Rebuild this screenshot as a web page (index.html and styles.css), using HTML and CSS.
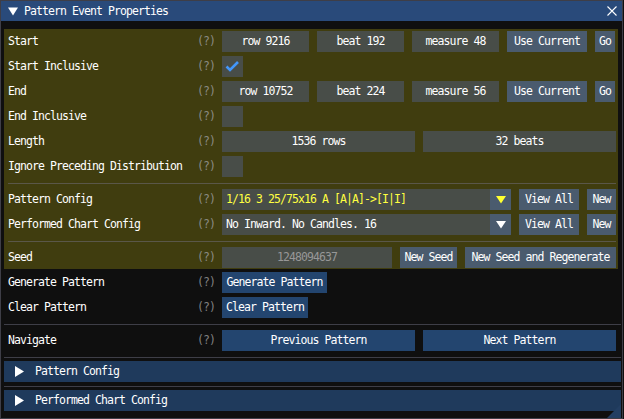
FILE: index.html
```html
<!DOCTYPE html>
<html>
<head>
<meta charset="utf-8">
<link rel="stylesheet" href="styles.css">
</head>
<body>
<div class="window">
  <div class="titlebar">
    <svg class="title-arrow" width="10" height="9" viewBox="0 0 10 9"><polygon points="0,0.5 10,0.5 5,8.5" fill="#fff"/></svg>
    <span class="title">Pattern Event Properties</span>
    <svg class="close" width="10" height="10" viewBox="0 0 10 10"><path d="M0.5 0.5 L9.5 9.5 M9.5 0.5 L0.5 9.5" stroke="#fff" stroke-width="1.1" fill="none"/></svg>
  </div>
  <div class="content">
    <div class="olive">
      <div class="row">
        <span class="label">Start</span><span class="help">(?)</span>
        <div class="ctl">
          <span class="field w87">row 9216</span>
          <span class="field w87">beat 192</span>
          <span class="field w87">measure 48</span>
          <span class="btn w80">Use Current</span>
          <span class="btn w20">Go</span>
        </div>
      </div>
      <div class="row">
        <span class="label">Start Inclusive</span><span class="help">(?)</span>
        <div class="ctl">
          <span class="check"><svg width="21" height="21" viewBox="0 0 21 21"><polyline points="4.5,10.5 8,14 16,6" fill="none" stroke="#4296fa" stroke-width="2.6"/></svg></span>
        </div>
      </div>
      <div class="row">
        <span class="label">End</span><span class="help">(?)</span>
        <div class="ctl">
          <span class="field w87">row 10752</span>
          <span class="field w87">beat 224</span>
          <span class="field w87">measure 56</span>
          <span class="btn w80">Use Current</span>
          <span class="btn w20">Go</span>
        </div>
      </div>
      <div class="row">
        <span class="label">End Inclusive</span><span class="help">(?)</span>
        <div class="ctl"><span class="check"></span></div>
      </div>
      <div class="row">
        <span class="label">Length</span><span class="help">(?)</span>
        <div class="ctl">
          <span class="field grow">1536 rows</span>
          <span class="field grow">32 beats</span>
        </div>
      </div>
      <div class="row">
        <span class="label">Ignore Preceding Distribution</span><span class="help">(?)</span>
        <div class="ctl"><span class="check"></span></div>
      </div>
      <div class="sep"></div>
      <div class="row">
        <span class="label">Pattern Config</span><span class="help">(?)</span>
        <div class="ctl">
          <div class="combo">
            <span class="combo-text yellow">1/16 3 25/75x16 A [A|A]-&gt;[I|I]</span>
            <span class="combo-arrow"><svg width="10" height="8" viewBox="0 0 10 8"><polygon points="0,0 10,0 5,7.5" fill="#ffff30"/></svg></span>
          </div>
          <span class="btn w60">View All</span>
          <span class="btn w29">New</span>
        </div>
      </div>
      <div class="row">
        <span class="label">Performed Chart Config</span><span class="help">(?)</span>
        <div class="ctl">
          <div class="combo">
            <span class="combo-text">No Inward. No Candles. 16</span>
            <span class="combo-arrow"><svg width="10" height="8" viewBox="0 0 10 8"><polygon points="0,0 10,0 5,7.5" fill="#fff"/></svg></span>
          </div>
          <span class="btn w60">View All</span>
          <span class="btn w29">New</span>
        </div>
      </div>
      <div class="sep"></div>
      <div class="row">
        <span class="label">Seed</span><span class="help">(?)</span>
        <div class="ctl">
          <span class="field grow dim">1248094637</span>
          <span class="btn w57">New Seed</span>
          <span class="btn w151">New Seed and Regenerate</span>
        </div>
      </div>
    </div>
    <div class="row outer first">
      <span class="label">Generate Pattern</span><span class="help">(?)</span>
      <div class="ctl"><span class="btn dark w105">Generate Pattern</span></div>
    </div>
    <div class="row outer">
      <span class="label">Clear Pattern</span><span class="help">(?)</span>
      <div class="ctl"><span class="btn dark w86">Clear Pattern</span></div>
    </div>
    <div class="sep dark-sep"></div>
    <div class="row outer">
      <span class="label">Navigate</span><span class="help">(?)</span>
      <div class="ctl">
        <span class="btn dark grow">Previous Pattern</span>
        <span class="btn dark grow">Next Pattern</span>
      </div>
    </div>
    <div class="sep dark-sep before-header"></div>
    <div class="header">
      <svg class="hdr-arrow" width="9" height="11" viewBox="0 0 9 11"><polygon points="0,0 9,5.5 0,11" fill="#fff"/></svg>
      <span>Pattern Config</span>
    </div>
    <div class="sep dark-sep between-headers"></div>
    <div class="header">
      <svg class="hdr-arrow" width="9" height="11" viewBox="0 0 9 11"><polygon points="0,0 9,5.5 0,11" fill="#fff"/></svg>
      <span>Performed Chart Config</span>
    </div>
  </div>
  <svg class="grip" width="14" height="14" viewBox="0 0 14 14"><polygon points="14,0 14,14 0,14" fill="#233e62"/></svg>
</div>
</body>
</html>
```
FILE: styles.css
```css
* { box-sizing: border-box; }

body {
  margin: 0;
  background: #0f0f0f;
  font-family: "DejaVu Sans Mono", "Liberation Mono", monospace;
  font-size: 11.5px;
  letter-spacing: -0.92px;
  color: #ffffff;
}

.window {
  position: relative;
  width: 623px;
  height: 419px;
  border: 1px solid #3e3e47;
  background: #0f0f0f;
  overflow: hidden;
}

.titlebar {
  height: 20px;
  background: #294a7a;
  display: flex;
  align-items: center;
  padding-left: 7px;
  line-height: 20px;
}

.title-arrow { margin-right: 6px; }

.close { margin-left: auto; margin-right: 5px; }

.content {
  display: flex;
  flex-direction: column;
  padding: 8px 1px 0 3px;
}

.olive {
  background: #403d0f;
  margin-right: 3px;
  padding: 2px 2px 1px 4px;
  display: flex;
  flex-direction: column;
}

.row {
  display: grid;
  grid-template-columns: 189px 25px 1fr;
  height: 21px;
  line-height: 21px;
  white-space: nowrap;
}

.row + .row { margin-top: 4px; }

.row.outer { padding: 0 5px 0 4px; }
.row.outer.first { margin-top: 3px; }

.help { color: #8a8a82; }
.outer .help { color: #808080; }

.ctl {
  display: flex;
  gap: 8px;
  height: 21px;
}

.field {
  background: #484d48;
  text-align: center;
  overflow: hidden;
}

.btn {
  background: #4a5b6e;
  text-align: center;
  overflow: hidden;
}

.btn.dark { background: #23456f; }

.grow { flex: 1; }
.w20 { width: 20px; }
.w29 { width: 29px; }
.w57 { width: 57px; }
.w60 { width: 60px; }
.w80 { width: 80px; }
.w86 { width: 86px; }
.w87 { width: 87px; }
.w105 { width: 105px; }
.w151 { width: 151px; }

.dim { color: #979797; }

.check {
  width: 21px;
  height: 21px;
  background: #484d48;
  display: block;
}
.check svg { display: block; }

.combo {
  flex: 1;
  display: flex;
}

.combo-text {
  flex: 1;
  background: #484d48;
  padding-left: 4px;
  overflow: hidden;
}

.yellow { color: #ffff40; }

.combo-arrow {
  width: 21px;
  background: #4a5b6e;
  display: flex;
  align-items: center;
  justify-content: center;
}

.sep {
  height: 1px;
  background: #5a5749;
  margin: 6px 0 5px;
}

.dark-sep { background: #3e3e47; }
.before-header { margin: 6px 0 3px; }
.between-headers { margin: 4px 0 3px; }

.header {
  height: 21px;
  line-height: 21px;
  background: #1f3a5c;
  display: flex;
  align-items: center;
  padding-left: 11px;
}

.hdr-arrow { margin-right: 11px; }

.grip {
  position: absolute;
  right: 1px;
  bottom: 0;
}
```
